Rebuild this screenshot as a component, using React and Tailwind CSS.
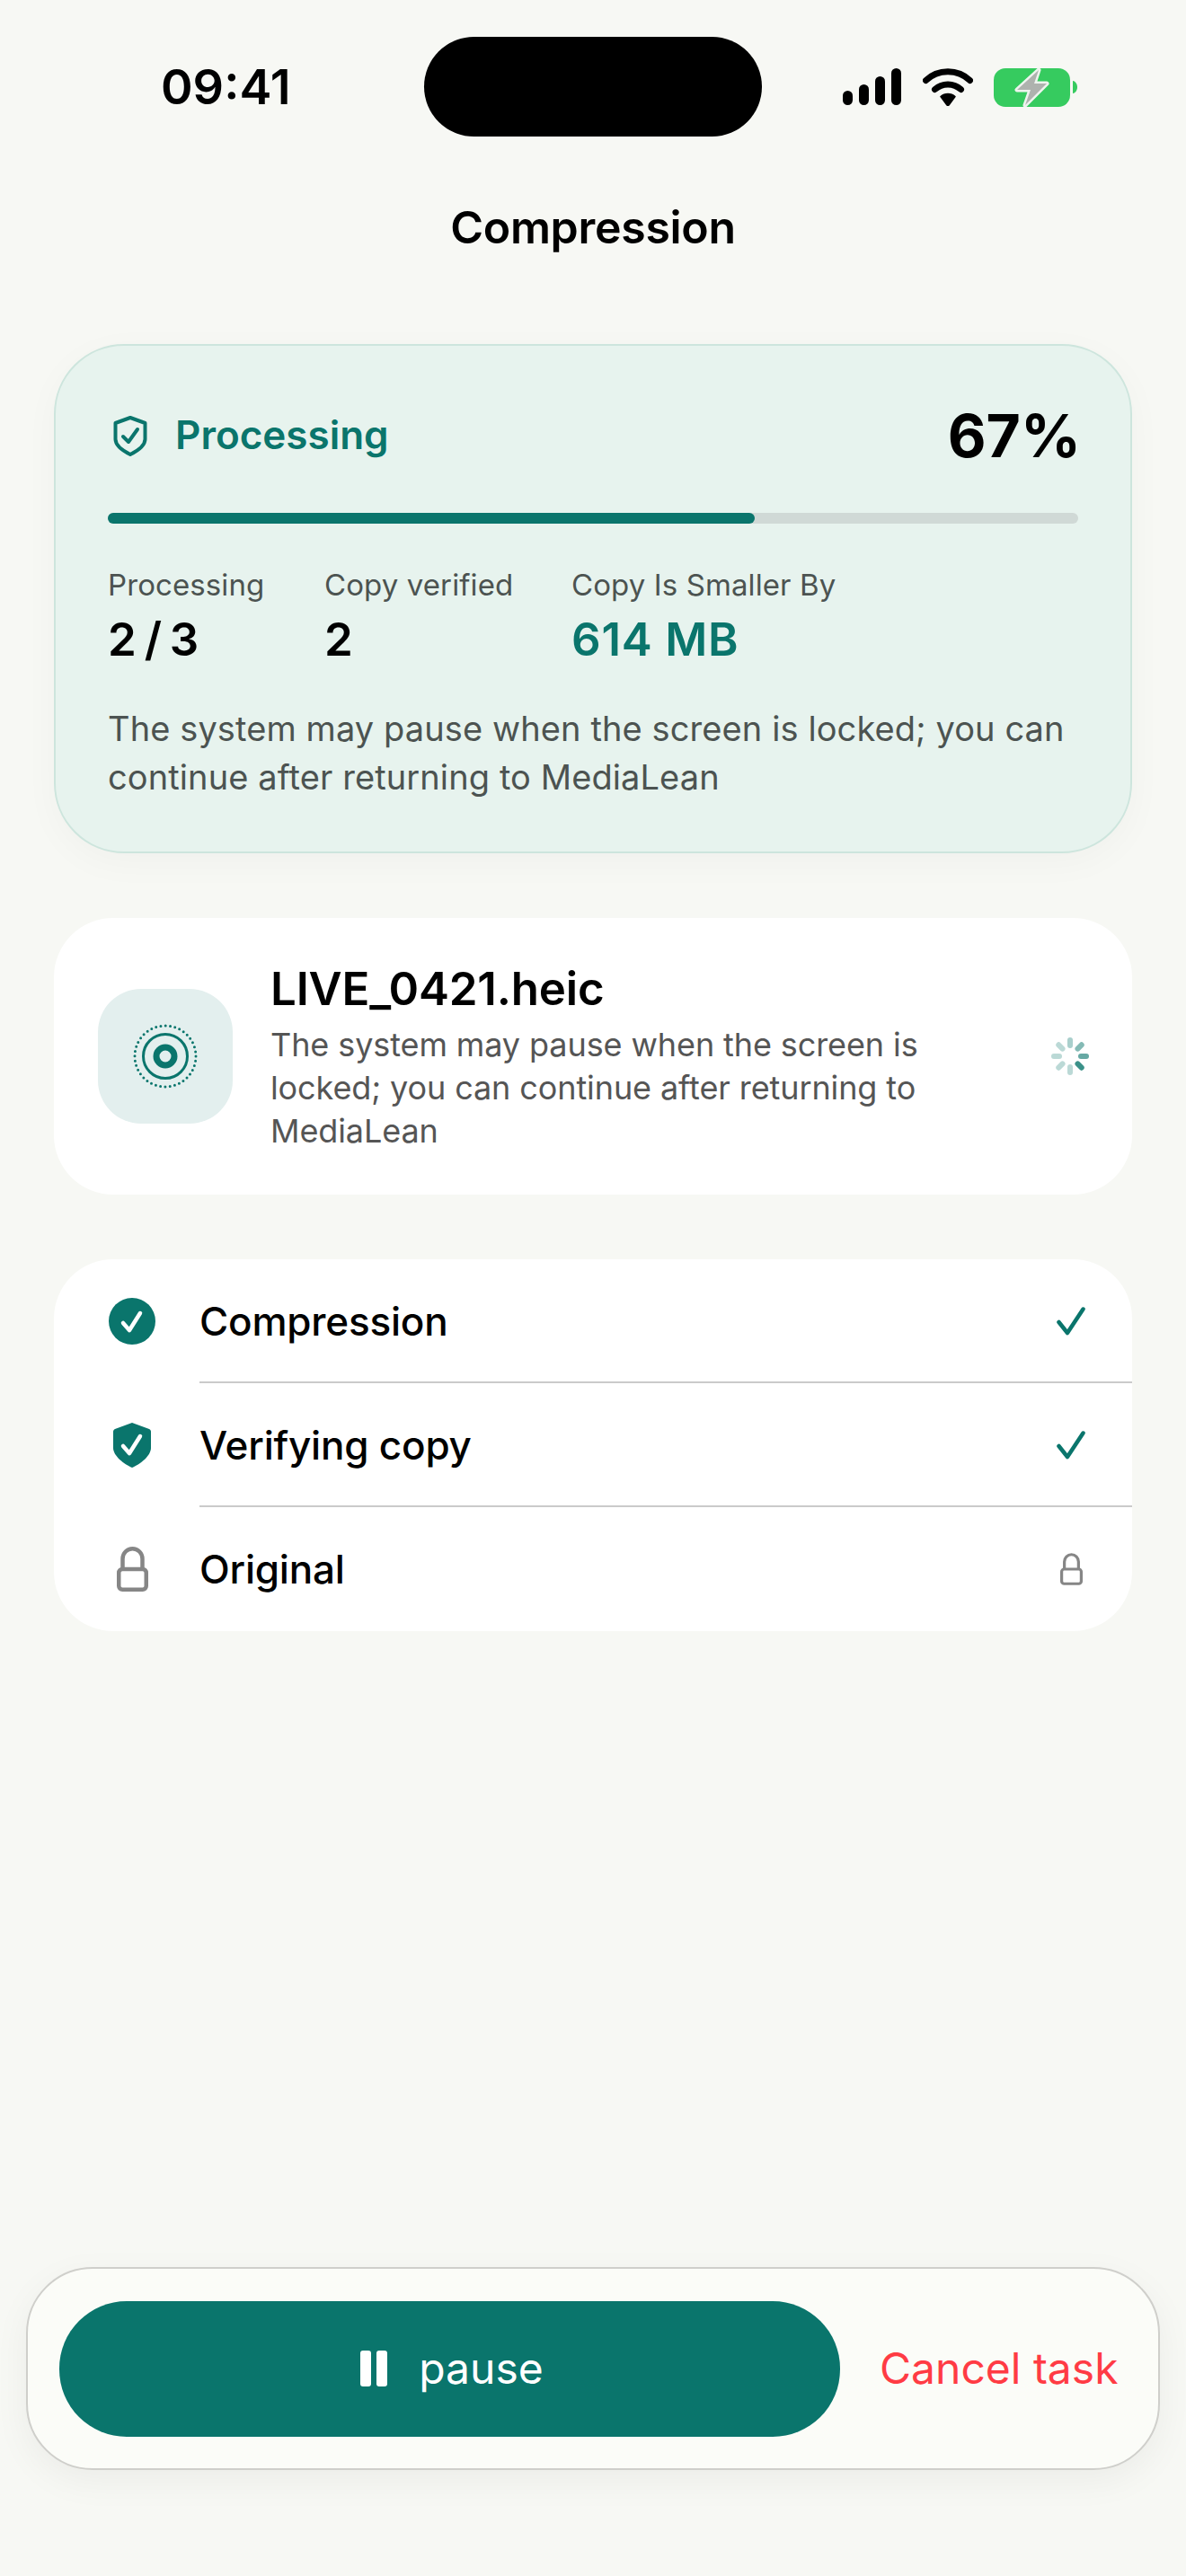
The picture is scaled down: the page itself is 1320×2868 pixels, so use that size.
import React from 'react';

const TEAL = '#0a756c';

const Signal = () => (
  <svg width="65" height="41" viewBox="0 0 65 41" fill="#000">
    <rect x="0" y="25" width="11" height="16" rx="5.5" />
    <rect x="18" y="18" width="11" height="23" rx="5.5" />
    <rect x="36" y="9" width="11" height="32" rx="5.5" />
    <rect x="54" y="0" width="11" height="41" rx="5.5" />
  </svg>
);

const Wifi = () => (
  <svg width="56" height="42" viewBox="0 0 56 42" fill="none" stroke="#000" strokeLinecap="round">
    <path d="M3.5 13.5C17 0.5 39 0.5 52.5 13.5" strokeWidth="7" />
    <path d="M13.5 23.5C21.5 16 34.5 16 42.5 23.5" strokeWidth="7" />
    <path d="M20 31.5C24.5 27.5 31.5 27.5 36 31.5L29.2 40.8C28.5 41.6 27.5 41.6 26.8 40.8Z" fill="#000" stroke="#000" strokeWidth="1.5" strokeLinejoin="round" />
  </svg>
);

const Battery = () => (
  <svg width="93" height="44" viewBox="0 0 93 44">
    <rect x="0" y="1" width="85" height="43" rx="13" fill="#36cb5f" />
    <path d="M88 15c3 .5 5 3.500 5 7s-2 6.500-5 7z" fill="#36cb5f" />
    <path d="M50 3L26 25H41L35 42L59 18H45Z" fill="#aeb2ae" stroke="#eef3ee" strokeWidth="5" strokeLinejoin="round" paintOrder="stroke" />
  </svg>
);

const ShieldOutline = () => (
  <svg width="38" height="45" viewBox="0 0 38 45" fill="none" stroke={TEAL} strokeLinecap="round" strokeLinejoin="round">
    <path d="M19 2L35.500 8V26C35.500 33 27 39 19 43C11 39 2.500 33 2.500 26V8Z" strokeWidth="4" />
    <path d="M11 23L17 29L27 15" strokeWidth="4" />
  </svg>
);

const FocusIcon = () => (
  <svg width="72" height="72" viewBox="0 0 72 72" fill="none" stroke={TEAL}>
    <circle cx="36" cy="36" r="34" strokeWidth="3" strokeLinecap="round" strokeDasharray="0 5.34" />
    <circle cx="36" cy="36" r="24.500" strokeWidth="3" />
    <circle cx="36" cy="36" r="10" strokeWidth="7" />
  </svg>
);

const Spinner = () => {
  const spokes = [0.28, 0.35, 0.5, 0.62, 0.8, 0.28, 0.28, 0.28];
  const order = [315, 0, 45, 90, 135, 180, 225, 270];
  return (
    <svg width="44" height="44" viewBox="0 0 44 44">
      {order.map((deg, i) => (
        <rect
          key={deg}
          x="19"
          y="1"
          width="6"
          height="12"
          rx="3"
          fill={TEAL}
          opacity={spokes[i]}
          transform={`rotate(${deg} 22 22)`}
        />
      ))}
    </svg>
  );
};

const Tick = () => (
  <svg width="32" height="32" viewBox="0 0 32 32" fill="none" stroke={TEAL} strokeWidth="4.500" strokeLinecap="round" strokeLinejoin="round">
    <path d="M2.500 17L12 29L29.500 2.500" />
  </svg>
);

const CircleCheck = () => (
  <svg width="52" height="52" viewBox="0 0 52 52" fill="none">
    <circle cx="26" cy="26" r="26" fill={TEAL} />
    <path d="M16 28L23 36L35 17" stroke="#fff" strokeWidth="4.500" strokeLinecap="round" strokeLinejoin="round" />
  </svg>
);

const ShieldCheck = () => (
  <svg width="42" height="50" viewBox="0 0 42 50" fill="none">
    <path d="M21 0L40 7C41.200 7.500 42 8.500 42 10V28C42 37 30 46 21 50C12 46 0 37 0 28V10C0 8.500 .8 7.500 2 7Z" fill={TEAL} />
    <path d="M11 26L18 34L30 15" stroke="#fff" strokeWidth="4.500" strokeLinecap="round" strokeLinejoin="round" />
  </svg>
);

const Lock = ({ w, h }) => (
  <svg width={w} height={h} viewBox="0 0 35 50" fill="none" stroke="#868686" strokeWidth="4.500">
    <path d="M6.500 26V13.500A11 11.250 0 0 1 28.500 13.500V26" />
    <rect x="2.250" y="25" width="30.500" height="22.750" rx="4" />
  </svg>
);

const Stat = ({ label, value, accent, className }) => (
  <div className={className}>
    <div className="text-[33px] leading-[40px] tracking-[0.1px] text-[#4c5351]">{label}</div>
    <div className={`mt-[11px] text-[51px] leading-[60px] font-semibold ${accent ? 'tracking-[0.8px] text-[#0a756c]' : '[word-spacing:-4px] text-black'}`}>{value}</div>
  </div>
);

const Step = ({ icon, label, right, last }) => (
  <div className="flex h-[138px] items-stretch">
    <div className="flex w-[162px] items-center justify-center pl-[12px]">
      <div className="flex w-[52px] justify-center">{icon}</div>
    </div>
    <div className={`flex flex-1 items-center justify-between pr-[52px] ${last ? '' : 'border-b-2 border-[#cacaca] pt-[2px]'}`}>
      <span className="text-[44px] font-medium tracking-[-0.2px] text-black">{label}</span>
      <div className="flex w-[32px] justify-center">{right}</div>
    </div>
  </div>
);

const App = () => {
  return (
    <div className="flex min-h-[2868px] flex-col bg-[#f7f8f4] pb-[118px] font-['Inter',sans-serif]">
      {/* Status bar */}
      <div className="flex items-center pt-[41px]">
        <div className="w-[472px] pl-[179px] text-[54px] leading-none font-semibold text-black">09:41</div>
        <div className="h-[111px] w-[376px] rounded-full bg-black" />
        <div className="flex items-center pl-[90px]">
          <Signal />
          <div className="ml-[24px]"><Wifi /></div>
          <div className="ml-[23px]"><Battery /></div>
        </div>
      </div>

      <h1 className="mt-[71px] text-center text-[50px] leading-[60px] font-semibold tracking-[-0.3px] text-black">Compression</h1>

      {/* Progress card */}
      <div className="mx-[60px] mt-[100px] h-[567px] rounded-[78px] border-2 border-[#cde5dd] bg-[#e7f3ee] px-[58px] pt-[62px] shadow-[0_10px_40px_rgba(0,0,0,0.03)]">
        <div className="flex h-[76px] items-center justify-between">
          <div className="flex items-center">
            <div className="ml-[6px]"><ShieldOutline /></div>
            <span className="mb-[2px] ml-[31px] text-[44px] font-semibold text-[#0a756c]">Processing</span>
          </div>
          <span className="-mr-[3px] text-[66px] font-bold text-black">67%</span>
        </div>
        <div className="mt-[48px] h-[12px] rounded-full bg-[#d0d9d6]">
          <div className="h-full rounded-full bg-[#0a756c]" style={{ width: `${(720 / 1080) * 100}%` }} />
        </div>
        <div className="mt-[48px] flex">
          <Stat label="Processing" value="2 / 3" className="w-[241px]" />
          <Stat label="Copy verified" value="2" className="w-[275px]" />
          <Stat label="Copy Is Smaller By" value="614 MB" accent />
        </div>
        <p className="mt-[42px] text-[38px] leading-[54px] tracking-[0.1px] text-[#4c5351]">
          The system may pause when the screen is locked; you can continue after returning to MediaLean
        </p>
      </div>

      {/* Current file */}
      <div className="mx-[60px] mt-[72px] flex h-[308px] items-center rounded-[66px] bg-white pl-[49px] pr-[47px]">
        <div className="flex h-[150px] w-[150px] shrink-0 items-center justify-center rounded-[48px] bg-[#e3efee]">
          <FocusIcon />
        </div>
        <div className="ml-[42px] flex-1">
          <div className="mt-[2px] text-[51px] leading-[60px] font-semibold tracking-[-0.2px] text-black">LIVE_0421.heic</div>
          <p className="mt-[8px] w-[760px] text-[36px] leading-[48px] tracking-[-0.1px] text-[#555]">
            The system may pause when the screen is locked; you can continue after returning to MediaLean
          </p>
        </div>
        <Spinner />
      </div>

      {/* Steps */}
      <div className="mx-[60px] mt-[72px] rounded-[66px] bg-white">
        <Step icon={<CircleCheck />} label="Compression" right={<Tick />} />
        <Step icon={<ShieldCheck />} label="Verifying copy" right={<Tick />} />
        <Step icon={<Lock w={35} h={50} />} label="Original" right={<Lock w={25} h={36} />} last />
      </div>

      {/* Bottom actions */}
      <div className="mx-[29px] mt-auto flex h-[226px] items-center rounded-[74px] border-2 border-[#cfcfcb] bg-[#fbfcf8] pl-[35px] shadow-[0_12px_40px_rgba(0,0,0,0.05)]">
        <button className="flex h-[151px] w-[869px] items-center justify-center rounded-[75px] bg-[#0a756c] pl-[5px]">
          <span className="flex gap-[6px]">
            <span className="h-[40px] w-[12px] rounded-[3px] bg-white" />
            <span className="h-[40px] w-[12px] rounded-[3px] bg-white" />
          </span>
          <span className="ml-[35px] text-[48px] text-white">pause</span>
        </button>
        <button className="ml-[44px] text-[48px] whitespace-nowrap text-[#ff3b44]">Cancel task</button>
      </div>
    </div>
  );
};

export default App;
